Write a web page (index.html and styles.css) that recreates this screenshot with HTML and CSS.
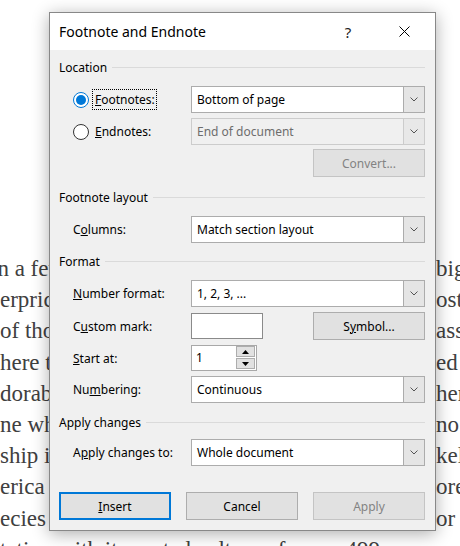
FILE: index.html
```html
<!DOCTYPE html>
<html lang="en">
<head>
<meta charset="utf-8">
<title>Footnote and Endnote</title>
<link rel="stylesheet" href="styles.css">
</head>
<body>
<div class="doc">
  <div class="line"><span class="l cut">in a few people were said to be the</span><span class="r">big</span></div>
  <div class="line"><span class="l">erpriced and the</span><span class="r">ost</span></div>
  <div class="line"><span class="l">of those who</span><span class="r">asse</span></div>
  <div class="line"><span class="l">here the</span><span class="r">ed</span></div>
  <div class="line"><span class="l">dorable</span><span class="r">her</span></div>
  <div class="line"><span class="l">ne who</span><span class="r">no</span></div>
  <div class="line"><span class="l">ship in</span><span class="r">kel</span></div>
  <div class="line"><span class="l">erica the</span><span class="r">ore,</span></div>
  <div class="line"><span class="l">ecies of</span><span class="r">or r</span></div>
  <div class="line full">tation with its rooted culture of some 499 years and</div>
</div>

<div class="dialog">
  <div class="titlebar">
    <span class="title">Footnote and Endnote</span>
    <span class="help">?</span>
    <svg class="close" width="11" height="11" viewBox="0 0 11 11"><path d="M0.5 0.5L10.5 10.5M10.5 0.5L0.5 10.5" stroke="#000" stroke-width="1" fill="none"/></svg>
  </div>
  <div class="body">
    <div class="group-head">Location</div>
    <div class="row r-foot">
      <div class="radio on"><span class="dot"></span><span class="lbl focus"><u>F</u>ootnotes:</span></div>
      <div class="combo"><span class="txt">Bottom of page</span><span class="drop"><svg width="8" height="5" viewBox="0 0 8 5"><path d="M0.5 0.5L4 4L7.5 0.5" stroke="#555" fill="none"/></svg></span></div>
    </div>
    <div class="row r-end">
      <div class="radio"><span class="dot"></span><span class="lbl"><u>E</u>ndnotes:</span></div>
      <div class="combo disabled"><span class="txt">End of document</span><span class="drop"><svg width="8" height="5" viewBox="0 0 8 5"><path d="M0.5 0.5L4 4L7.5 0.5" stroke="#555" fill="none"/></svg></span></div>
    </div>
    <div class="convert-row">
      <div class="btn disabled">Convert...</div>
    </div>

    <div class="group-head g-layout">Footnote layout</div>
    <div class="row r-cols">
      <span class="label">C<u>o</u>lumns:</span>
      <div class="combo"><span class="txt">Match section layout</span><span class="drop"><svg width="8" height="5" viewBox="0 0 8 5"><path d="M0.5 0.5L4 4L7.5 0.5" stroke="#555" fill="none"/></svg></span></div>
    </div>

    <div class="group-head g-format">Format</div>
    <div class="row r-num">
      <span class="label"><u>N</u>umber format:</span>
      <div class="combo"><span class="txt">1, 2, 3, ...</span><span class="drop"><svg width="8" height="5" viewBox="0 0 8 5"><path d="M0.5 0.5L4 4L7.5 0.5" stroke="#555" fill="none"/></svg></span></div>
    </div>
    <div class="row r-custom">
      <span class="label">C<u>u</u>stom mark:</span>
      <div class="custom-ctrls">
        <div class="input"></div>
        <div class="btn">S<u>y</u>mbol...</div>
      </div>
    </div>
    <div class="row r-start">
      <span class="label"><u>S</u>tart at:</span>
      <div class="spin">
        <span class="val">1</span>
        <span class="arrows">
          <span class="arr"><svg width="7" height="4" viewBox="0 0 7 4"><path d="M0 4L3.5 0L7 4Z" fill="#000"/></svg></span>
          <span class="arr"><svg width="7" height="4" viewBox="0 0 7 4"><path d="M0 0L3.5 4L7 0Z" fill="#000"/></svg></span>
        </span>
      </div>
    </div>
    <div class="row r-numbering">
      <span class="label">Nu<u>m</u>bering:</span>
      <div class="combo"><span class="txt">Continuous</span><span class="drop"><svg width="8" height="5" viewBox="0 0 8 5"><path d="M0.5 0.5L4 4L7.5 0.5" stroke="#555" fill="none"/></svg></span></div>
    </div>

    <div class="group-head g-apply">Apply changes</div>
    <div class="row r-apply">
      <span class="label">A<u>p</u>ply changes to:</span>
      <div class="combo"><span class="txt">Whole document</span><span class="drop"><svg width="8" height="5" viewBox="0 0 8 5"><path d="M0.5 0.5L4 4L7.5 0.5" stroke="#555" fill="none"/></svg></span></div>
    </div>

    <div class="buttons">
      <div class="btn default"><u>I</u>nsert</div>
      <div class="btn">Cancel</div>
      <div class="btn disabled">Apply</div>
    </div>
  </div>
</div>
</body>
</html>
```

FILE: styles.css
```css
html, body {
  margin: 0;
  padding: 0;
}
body {
  width: 460px;
  height: 546px;
  overflow: hidden;
  position: relative;
  background: #fff;
  font-family: "Liberation Serif", serif;
}

/* background document */
.doc {
  padding-top: 253px;
  font-size: 23px;
  line-height: 31.2px;
  color: #404040;
}
.line {
  display: grid;
  grid-template-columns: 436px auto;
  white-space: nowrap;
  overflow: hidden;
}
.line.full {
  display: block;
}
.l {
  overflow: hidden;
}
.cut {
  margin-left: -9px;
}

/* dialog */
.dialog {
  position: absolute;
  left: 49px;
  top: 12px;
  width: 385px;
  height: 517px;
  border: 1px solid #888;
  background: #f0f0f0;
  box-shadow: 0 3px 16px rgba(0, 0, 0, 0.32);
  font-family: "Noto Sans", sans-serif;
  font-size: 12px;
  color: #000;
  display: flex;
  flex-direction: column;
}
.titlebar {
  height: 37px;
  background: #fff;
  display: flex;
  align-items: center;
  padding-left: 9px;
}
.title {
  flex: 1;
  font-size: 14px;
  color: #000;
}
.help {
  width: 20px;
  text-align: center;
  font-size: 15px;
  color: #222;
  margin-right: 41px;
}
.close {
  margin-right: 25px;
}

.body {
  padding: 0 10px 0 9px;
  display: flex;
  flex-direction: column;
}
.group-head {
  display: flex;
  align-items: center;
  gap: 5px;
  height: 16px;
  margin-top: 10px;
  line-height: 16px;
}
.group-head::after {
  content: "";
  flex: 1;
  border-top: 1px solid #dadada;
  margin-top: -1px;
}
.g-layout { margin-top: 13px; }
.g-format { margin-top: 11px; }
.g-apply { margin-top: 12px; }

.row {
  display: grid;
  grid-template-columns: 118px 1fr;
  align-items: center;
  padding-left: 14px;
  height: 27px;
  margin-top: 5px;
}
.r-foot { margin-top: 10px; }
.r-cols { margin-top: 10px; }
.r-num { margin-top: 10px; }
.r-start { margin-top: 6px; height: 26px; }
.r-apply { margin-top: 8px; }

.radio {
  display: flex;
  align-items: center;
}
.dot {
  width: 16px;
  height: 16px;
  box-sizing: border-box;
  border: 1px solid #333;
  border-radius: 50%;
  background: #fff;
  margin-right: 3px;
  display: flex;
  align-items: center;
  justify-content: center;
}
.radio.on .dot {
  border-color: #0078d7;
}
.radio.on .dot::after {
  content: "";
  width: 10px;
  height: 10px;
  border-radius: 50%;
  background: #0078d7;
}
.lbl {
  border: 1px dotted transparent;
  padding: 1px 1px 1px 2px;
  line-height: 17px;
}
.lbl.focus {
  border-color: #000;
}

.combo {
  height: 27px;
  box-sizing: border-box;
  border: 1px solid #acacac;
  background: #fff;
  display: flex;
  align-items: center;
}
.combo .txt {
  flex: 1;
  padding-left: 5px;
}
.combo .drop {
  width: 20px;
  align-self: stretch;
  background: #e5e5e5;
  border-left: 1px solid #acacac;
  display: flex;
  align-items: center;
  justify-content: center;
}
.combo.disabled {
  border-color: #cccccc;
  background: #f0f0f0;
  color: #6d6d6d;
}
.combo.disabled .drop {
  border-left-color: #cccccc;
  background: #e8e8e8;
}

.convert-row {
  display: flex;
  justify-content: flex-end;
  margin-top: 4px;
}

.btn {
  width: 112px;
  height: 28px;
  box-sizing: border-box;
  background: #e1e1e1;
  border: 1px solid #adadad;
  display: flex;
  align-items: center;
  justify-content: center;
}
.btn.disabled {
  color: #838383;
  border-color: #c4c4c4;
}
.btn.default {
  border: 2px solid #0078d7;
}

.custom-ctrls {
  display: flex;
  justify-content: space-between;
  align-items: center;
}
.input {
  width: 72px;
  height: 26px;
  box-sizing: border-box;
  border: 1px solid #8a8a8a;
  background: #fff;
}

.spin {
  width: 66px;
  height: 26px;
  box-sizing: border-box;
  border: 1px solid #a8a8a8;
  background: #fff;
  display: flex;
}
.spin .val {
  flex: 1;
  padding-left: 4px;
  line-height: 24px;
}
.arrows {
  width: 19px;
  margin: 0 1px 1px 0;
  display: flex;
  flex-direction: column;
  gap: 1px;
}
.arr {
  flex: 1;
  background: #e1e1e1;
  border: 1px solid #adadad;
  display: flex;
  align-items: center;
  justify-content: center;
}

.buttons {
  display: flex;
  gap: 15px;
  margin-top: 26px;
}
```
